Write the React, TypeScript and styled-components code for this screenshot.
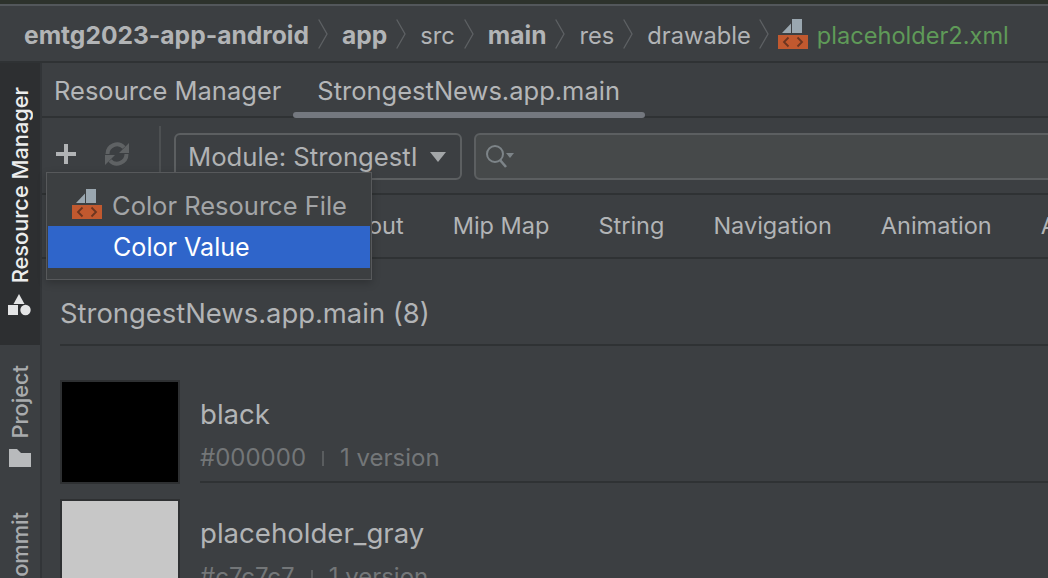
import React from "react";
import styled, { createGlobalStyle } from "styled-components";

const Global = createGlobalStyle`
  html, body { margin: 0; padding: 0; background: #3c3f42; }
  * { box-sizing: border-box; }
`;

const Page = styled.div`
  position: relative;
  width: 1048px;
  height: 578px;
  overflow: hidden;
  display: flex;
  flex-direction: column;
  background: #3c3f42;
  font-family: Inter, "Noto Sans", sans-serif;
  color: #b4b6b8;
`;

const TopStrip = styled.div`
  height: 4px;
  flex: none;
  background: #2d322c;
`;

const Breadcrumbs = styled.div`
  height: 59px;
  flex: none;
  display: flex;
  align-items: center;
  padding: 3px 0 0 24px;
  border-top: 2px solid #53575b;
  border-bottom: 2px solid #2f3234;
  white-space: nowrap;
`;

const Crumb = styled.span<{ $bold?: boolean }>`
  font-weight: ${(p) => (p.$bold ? 700 : 400)};
  font-size: ${(p) => (p.$bold ? "24.6px" : "23.7px")};
  color: #b2b4b6;
`;

const FileCrumb = styled.span`
  color: #5f9a58;
  margin-left: 9px;
  font-size: 23.6px;
`;

const Chevron = styled.svg<{ $tight?: boolean }>`
  width: 10px;
  height: 30px;
  margin: -3px ${(p) => (p.$tight ? 9 : 14)}px 0 ${(p) => (p.$tight ? 8 : 9)}px;
  flex: none;
`;

const Body = styled.div`
  flex: 1;
  display: flex;
  min-height: 0;
`;

const Rail = styled.div`
  width: 42px;
  flex: none;
  display: flex;
  flex-direction: column;
  background: #3c3f42;
  border-right: 2px solid #323538;
`;

const RailTab = styled.div<{ $active?: boolean; $height: number; $pad?: number }>`
  height: ${(p) => p.$height}px;
  flex: none;
  display: flex;
  flex-direction: column;
  align-items: center;
  justify-content: flex-end;
  gap: 11px;
  padding-bottom: ${(p) => p.$pad ?? 0}px;
  background: ${(p) => (p.$active ? "#2d2f31" : "transparent")};
  color: ${(p) => (p.$active ? "#eceded" : "#a9abad")};
`;

const RailLabel = styled.span`
  writing-mode: vertical-rl;
  transform: rotate(180deg);
  font-size: 21.8px;
  font-weight: 500;
  line-height: 22px;
  white-space: nowrap;
`;

const Main = styled.div`
  flex: 1;
  min-width: 0;
  display: flex;
  flex-direction: column;
`;

const TabBar = styled.div`
  height: 55px;
  flex: none;
  display: flex;
  align-items: stretch;
  padding-left: 12px;
  border-bottom: 2px solid #2f3234;
`;

const Tab = styled.div<{ $active?: boolean }>`
  position: relative;
  display: flex;
  align-items: center;
  padding: 2px ${(p) => (p.$active ? "25px" : "0")} 0 ${(p) => (p.$active ? "24px" : "0")};
  margin-right: ${(p) => (p.$active ? 0 : "12px")};
  font-size: 25.5px;
  color: #b4b6b8;
  white-space: nowrap;
  ${(p) =>
    p.$active
      ? `&::after {
    content: "";
    position: absolute;
    left: 0;
    right: 0;
    bottom: -2px;
    height: 6px;
    border-radius: 3px;
    background: #74787f;
  }`
      : ""}
`;

const Toolbar = styled.div`
  height: 77px;
  flex: none;
  display: flex;
  align-items: flex-start;
  padding: 15px 0 0 0;
  border-bottom: 2px solid #2f3234;
`;

const IconSlot = styled.div`
  width: 24px;
  height: 24px;
  margin: 9px 0 0 12px;
  flex: none;
  display: flex;
  align-items: center;
  justify-content: center;
`;

const SyncSlot = styled(IconSlot)`
  margin-left: 26px;
  width: 26px;
`;

const ToolDivider = styled.div`
  width: 2px;
  height: 48px;
  margin: -7px 13px 0 29px;
  background: #4d5052;
  flex: none;
`;

const ModuleSelect = styled.div`
  width: 288px;
  height: 47px;
  flex: none;
  display: flex;
  align-items: center;
  justify-content: space-between;
  padding: 0 14px 0 12px;
  border: 2px solid #5c5f61;
  border-radius: 6px;
  font-size: 25.7px;
  color: #b0b2b4;
  white-space: nowrap;
  overflow: hidden;
`;

const Caret = styled.span`
  width: 0;
  height: 0;
  border-left: 8px solid transparent;
  border-right: 8px solid transparent;
  border-top: 10px solid #a3a6a8;
  flex: none;
`;

const SearchBox = styled.div`
  flex: 1;
  height: 47px;
  margin-left: 12px;
  margin-right: -12px;
  display: flex;
  align-items: center;
  padding-left: 9px;
  background: #46494a;
  border: 2px solid #5c5f61;
  border-radius: 6px;
`;

const FilterBar = styled.div`
  height: 64px;
  flex: none;
  display: flex;
  align-items: center;
  gap: 49px;
  padding: 0 0 2px 24px;
  border-bottom: 2px solid #2f3234;
  font-size: 23.5px;
  white-space: nowrap;
  color: #b2b4b6;
`;

const Section = styled.div`
  flex: 1;
  min-height: 0;
  padding-left: 18px;
  display: flex;
  flex-direction: column;
`;

const SectionTitle = styled.div`
  height: 87px;
  flex: none;
  display: flex;
  align-items: center;
  font-size: 27.4px;
  color: #b2b4b6;
  border-bottom: 2px solid #2f3234;
  white-space: nowrap;
  padding-top: 22px;
`;

const ResourceRow = styled.div<{ $first?: boolean }>`
  flex: none;
  display: flex;
  align-items: flex-start;
  gap: 20px;
  padding-top: ${(p) => (p.$first ? "34px" : "16px")};
  margin-top: ${(p) => (p.$first ? "0" : "-1px")};
  height: ${(p) => (p.$first ? "138px" : "120px")};
`;

const Swatch = styled.div<{ $color: string }>`
  width: 120px;
  height: 104px;
  flex: none;
  background: ${(p) => p.$color};
  border: 2px solid #2e3032;
`;

const ResourceInfo = styled.div<{ $divider?: boolean }>`
  flex: 1;
  height: 103px;
  display: flex;
  flex-direction: column;
  border-bottom: ${(p) => (p.$divider ? "2px solid #2f3234" : "0")};
`;

const ResourceName = styled.div`
  margin-top: 18px;
  font-size: 27.6px;
  line-height: 32px;
  color: #b2b4b6;
  white-space: nowrap;
`;

const ResourceMeta = styled.div`
  margin-top: 14px;
  display: flex;
  align-items: center;
  font-size: 24px;
  line-height: 28px;
  color: #737678;
  white-space: nowrap;
`;

const MetaDivider = styled.span`
  width: 2px;
  height: 15px;
  margin: 0 16px 0 16px;
  background: #5a5d5f;
  flex: none;
`;

const Popup = styled.div`
  position: absolute;
  left: 46px;
  top: 172px;
  width: 326px;
  height: 108px;
  padding: 12px 1px 0;
  background: #3c3f41;
  border: 1px solid #57595b;
  box-shadow: 0 3px 8px rgba(0, 0, 0, 0.22);
`;

const MenuItem = styled.div<{ $selected?: boolean }>`
  height: ${(p) => (p.$selected ? "42px" : "41px")};
  display: flex;
  align-items: center;
  gap: 10px;
  padding: ${(p) => (p.$selected ? "0 0 0 65px" : "0 0 0 24px")};
  background: ${(p) => (p.$selected ? "#2f65ca" : "transparent")};
  color: ${(p) => (p.$selected ? "#ffffff" : "#a3a5a7")};
  font-size: ${(p) => (p.$selected ? "25.1px" : "25.5px")};
  white-space: nowrap;
`;

const XmlIcon = () => (
  <svg width={30} height={30} viewBox="0 0 30 30" style={{ flex: "none", marginTop: -3 }}>
    <path d="M4 14 L13 4.5 V14 Z M14 0 H24 V14 H14 Z" fill="#9aa7b0" />
    <rect x="0" y="16" width="30" height="14" fill="#c1592f" />
    <path
      d="M10.5 18.5 L6 23 L10.5 27.5 M19.5 18.5 L24 23 L19.5 27.5"
      stroke="#6b3520"
      strokeWidth="1.8"
      fill="none"
    />
  </svg>
);

const Sep = ({ tight }: { tight?: boolean }) => (
  <Chevron viewBox="0 0 10 30" $tight={tight}>
    <path d="M0.7 0.5 L9 15 L0.7 29.5" stroke="#5e6164" strokeWidth="1.3" fill="none" />
  </Chevron>
);

const ResourceManagerIcon = () => (
  <svg width="24" height="22" viewBox="0 0 24 22">
    <path d="M11 0 L16.5 10 H5.5 Z" fill="#e4e5e6" />
    <rect x="0" y="11" width="10" height="10" fill="#e4e5e6" />
    <circle cx="17.5" cy="16" r="5.2" fill="#e4e5e6" />
  </svg>
);

const FolderIcon = () => (
  <svg width="24" height="18" viewBox="0 0 24 18">
    <path d="M1 0 H9 L13 4 H23 V18 H1 Z" fill="#b8babc" />
  </svg>
);

const PlusIcon = () => (
  <svg width="20" height="20" viewBox="0 0 20 20">
    <path d="M10 0 V20 M0 10 H20" stroke="#b1b3b5" strokeWidth="4" />
  </svg>
);

const SyncIcon = () => (
  <svg width="26" height="26" viewBox="0 0 26 26" fill="none">
    <path d="M3.5 13 A9.5 9.5 0 0 1 20 6.5" stroke="#5f6264" strokeWidth="4" />
    <path d="M22.5 13 A9.5 9.5 0 0 1 6 19.5" stroke="#5f6264" strokeWidth="4" />
    <path d="M15 12 H25 V2 Z M11 14 H1 V24 Z" fill="#5f6264" />
  </svg>
);

const SearchIcon = () => (
  <svg width="30" height="26" viewBox="0 0 30 26" fill="none">
    <circle cx="10" cy="10" r="8" stroke="#7d8488" strokeWidth="2" />
    <path d="M15 16 L21 23" stroke="#7d8488" strokeWidth="2.6" />
    <path d="M21 9 H29 L25 14 Z" fill="#7d8488" />
  </svg>
);

export default function App() {
  return (
    <Page>
      <Global />
      <TopStrip />
      <Breadcrumbs>
        <Crumb $bold>emtg2023-app-android</Crumb>
        <Sep />
        <Crumb $bold>app</Crumb>
        <Sep />
        <Crumb>src</Crumb>
        <Sep />
        <Crumb $bold>main</Crumb>
        <Sep />
        <Crumb>res</Crumb>
        <Sep />
        <Crumb>drawable</Crumb>
        <Sep tight />
        <XmlIcon />
        <FileCrumb>placeholder2.xml</FileCrumb>
      </Breadcrumbs>
      <Body>
        <Rail>
          <RailTab $active $height={282} $pad={29}>
            <RailLabel>Resource Manager</RailLabel>
            <ResourceManagerIcon />
          </RailTab>
          <RailTab $height={122}>
            <RailLabel>Project</RailLabel>
            <FolderIcon />
          </RailTab>
          <RailTab $height={126}>
            <RailLabel>Commit</RailLabel>
          </RailTab>
        </Rail>
        <Main>
          <TabBar>
            <Tab>Resource Manager</Tab>
            <Tab $active>StrongestNews.app.main</Tab>
          </TabBar>
          <Toolbar>
            <IconSlot>
              <PlusIcon />
            </IconSlot>
            <SyncSlot>
              <SyncIcon />
            </SyncSlot>
            <ToolDivider />
            <ModuleSelect>
              Module: StrongestI
              <Caret />
            </ModuleSelect>
            <SearchBox>
              <SearchIcon />
            </SearchBox>
          </Toolbar>
          <FilterBar>
            <span>Drawable</span>
            <span>Color</span>
            <span>Layout</span>
            <span>Mip Map</span>
            <span>String</span>
            <span>Navigation</span>
            <span>Animation</span>
            <span>Animator</span>
          </FilterBar>
          <Section>
            <SectionTitle>StrongestNews.app.main (8)</SectionTitle>
            <ResourceRow $first>
              <Swatch $color="#000000" />
              <ResourceInfo $divider>
                <ResourceName>black</ResourceName>
                <ResourceMeta>
                  #000000
                  <MetaDivider />1 version
                </ResourceMeta>
              </ResourceInfo>
            </ResourceRow>
            <ResourceRow>
              <Swatch $color="#c7c7c7" />
              <ResourceInfo>
                <ResourceName>placeholder_gray</ResourceName>
                <ResourceMeta>
                  #c7c7c7
                  <MetaDivider />1 version
                </ResourceMeta>
              </ResourceInfo>
            </ResourceRow>
          </Section>
        </Main>
      </Body>
      <Popup>
        <MenuItem>
          <XmlIcon />
          Color Resource File
        </MenuItem>
        <MenuItem $selected>Color Value</MenuItem>
      </Popup>
    </Page>
  );
}
